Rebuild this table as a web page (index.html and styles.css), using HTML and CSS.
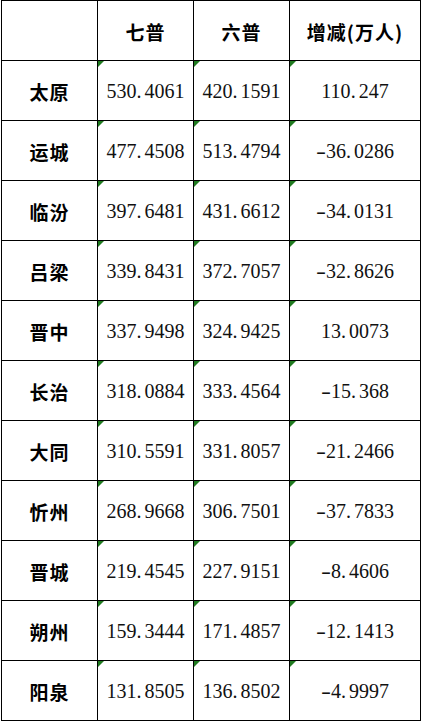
FILE: index.html
```html
<!DOCTYPE html>
<html lang="zh">
<head>
<meta charset="utf-8">
<title>山西七普六普人口对比</title>
<link rel="stylesheet" href="styles.css">
</head>
<body>
<table class="sheet">
  <colgroup>
    <col class="c-name"><col class="c-num"><col class="c-num"><col class="c-diff">
  </colgroup>
  <thead>
    <tr><th></th><th>七普</th><th>六普</th><th>增减(万人)</th></tr>
  </thead>
  <tbody>
    <tr><th>太原</th><td class="n">530<span class="dot">.</span>4061</td><td class="n">420<span class="dot">.</span>1591</td><td class="n">110<span class="dot">.</span>247</td></tr>
    <tr><th>运城</th><td class="n">477<span class="dot">.</span>4508</td><td class="n">513<span class="dot">.</span>4794</td><td class="n"><span class="minus">-</span>36<span class="dot">.</span>0286</td></tr>
    <tr><th>临汾</th><td class="n">397<span class="dot">.</span>6481</td><td class="n">431<span class="dot">.</span>6612</td><td class="n"><span class="minus">-</span>34<span class="dot">.</span>0131</td></tr>
    <tr><th>吕梁</th><td class="n">339<span class="dot">.</span>8431</td><td class="n">372<span class="dot">.</span>7057</td><td class="n"><span class="minus">-</span>32<span class="dot">.</span>8626</td></tr>
    <tr><th>晋中</th><td class="n">337<span class="dot">.</span>9498</td><td class="n">324<span class="dot">.</span>9425</td><td class="n">13<span class="dot">.</span>0073</td></tr>
    <tr><th>长治</th><td class="n">318<span class="dot">.</span>0884</td><td class="n">333<span class="dot">.</span>4564</td><td class="n"><span class="minus">-</span>15<span class="dot">.</span>368</td></tr>
    <tr><th>大同</th><td class="n">310<span class="dot">.</span>5591</td><td class="n">331<span class="dot">.</span>8057</td><td class="n"><span class="minus">-</span>21<span class="dot">.</span>2466</td></tr>
    <tr><th>忻州</th><td class="n">268<span class="dot">.</span>9668</td><td class="n">306<span class="dot">.</span>7501</td><td class="n"><span class="minus">-</span>37<span class="dot">.</span>7833</td></tr>
    <tr><th>晋城</th><td class="n">219<span class="dot">.</span>4545</td><td class="n">227<span class="dot">.</span>9151</td><td class="n"><span class="minus">-</span>8<span class="dot">.</span>4606</td></tr>
    <tr><th>朔州</th><td class="n">159<span class="dot">.</span>3444</td><td class="n">171<span class="dot">.</span>4857</td><td class="n"><span class="minus">-</span>12<span class="dot">.</span>1413</td></tr>
    <tr><th>阳泉</th><td class="n">131<span class="dot">.</span>8505</td><td class="n">136<span class="dot">.</span>8502</td><td class="n"><span class="minus">-</span>4<span class="dot">.</span>9997</td></tr>
  </tbody>
</table>
</body>
</html>
```
FILE: styles.css
```css
html, body {
  margin: 0;
  padding: 0;
  background: #ffffff;
}

body {
  padding-left: 1px;
}

.sheet {
  border-collapse: collapse;
  table-layout: fixed;
  width: 419px;
  color: #000;
}

.c-name, .c-num { width: 96px; }
.c-diff { width: 131px; }

.sheet th,
.sheet td {
  border: 1px solid #000;
  height: 57px;
  padding: 2px 0 0;
  text-align: center;
  vertical-align: middle;
  white-space: nowrap;
}

.sheet th {
  font-family: "Noto Sans CJK SC", sans-serif;
  font-weight: 700;
  font-size: 19px;
  letter-spacing: 1px;
}

.sheet td {
  font-family: "Liberation Serif", "Times New Roman", serif;
  font-size: 20px;
  position: relative;
  color: #111;
}

.dot {
  margin-right: 3px;
}

.minus {
  display: inline-block;
  width: 10px;
  transform: scaleX(1.5);
  text-align: center;
}

.n::before {
  content: "";
  position: absolute;
  left: 0;
  top: 0;
  width: 0;
  height: 0;
  border-top: 6px solid #1f7a1f;
  border-right: 6px solid transparent;
}
```
